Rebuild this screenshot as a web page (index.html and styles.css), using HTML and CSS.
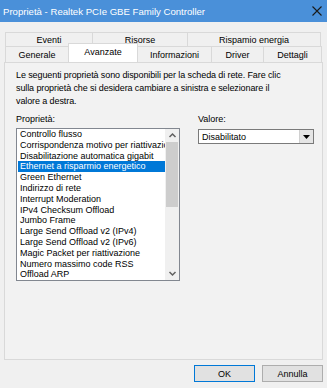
FILE: index.html
```html
<!doctype html>
<html lang="it">
<head>
	<meta charset="UTF-8">
	<title>Proprietà - Realtek PCIe GBE Family Controller</title>

	<link rel="stylesheet" href="styles.css">
</head>
<body>
	<div class="dialog">
		<div class="titlebar">
			<span class="title">Proprietà - Realtek PCIe GBE Family Controller</span>
			<svg class="close" width="10" height="10" viewBox="0 0 10 10">
				<path d="M0.5 0.5 L9.5 9.5 M9.5 0.5 L0.5 9.5" stroke="#1a1a1a" stroke-width="1.1" fill="none"/>
			</svg>
		</div>

		<div class="tabs">
			<div class="tab-row back">
				<div class="tab w-eventi">Eventi</div>
				<div class="tab w-risorse">Risorse</div>
				<div class="tab w-risparmio">Rispamio energia</div>
			</div>
			<div class="tab-row front">
				<div class="tab w-generale">Generale</div>
				<div class="tab w-avanzate active">Avanzate</div>
				<div class="tab w-informazioni">Informazioni</div>
				<div class="tab w-driver">Driver</div>
				<div class="tab w-dettagli">Dettagli</div>
			</div>
		</div>

		<div class="panel">
			<p class="intro">Le seguenti proprietà sono disponibili per la scheda di rete. Fare clic sulla proprietà che si desidera cambiare a sinistra e selezionare il valore a destra.</p>

			<div class="fields">
				<div class="col-props">
					<div class="label">Proprietà:</div>
					<div class="listbox">
						<ul class="items">
							<li>Controllo flusso</li>
							<li>Corrispondenza motivo per riattivazione</li>
							<li>Disabilitazione automatica gigabit</li>
							<li class="selected">Ethernet a risparmio energetico</li>
							<li>Green Ethernet</li>
							<li>Indirizzo di rete</li>
							<li>Interrupt Moderation</li>
							<li>IPv4 Checksum Offload</li>
							<li>Jumbo Frame</li>
							<li>Large Send Offload v2 (IPv4)</li>
							<li>Large Send Offload v2 (IPv6)</li>
							<li>Magic Packet per riattivazione</li>
							<li>Numero massimo code RSS</li>
							<li>Offload ARP</li>
						</ul>
						<div class="scrollbar">
							<svg class="arrow" width="13" height="9" viewBox="0 0 13 9">
								<path d="M3.5 6 L6.5 3 L9.5 6" stroke="#606060" stroke-width="1.5" fill="none"/>
							</svg>
							<div class="track">
								<div class="thumb"></div>
							</div>
							<svg class="arrow" width="13" height="9" viewBox="0 0 13 9">
								<path d="M3.5 3 L6.5 6 L9.5 3" stroke="#606060" stroke-width="1.5" fill="none"/>
							</svg>
						</div>
					</div>
				</div>

				<div class="col-value">
					<div class="label">Valore:</div>
					<div class="combo">
						<span class="combo-text">Disabilitato</span>
						<span class="combo-button">
							<svg width="7" height="4" viewBox="0 0 7 4">
								<path d="M0 0 L7 0 L3.5 4 Z" fill="#000"/>
							</svg>
						</span>
					</div>
				</div>
			</div>
		</div>

		<div class="buttons">
			<button class="btn default">OK</button>
			<button class="btn">Annulla</button>
		</div>
	</div>
</body>
</html>
```

FILE: styles.css
```css
html {
	box-sizing: border-box;
}

*, *:before, *:after {
	box-sizing: inherit;
}

body {
	margin: 0;
	font-family: "Liberation Sans", Arial, sans-serif;
	font-size: 9px;
	color: #000;
	background: #f0f0f0;
}

.dialog {
	width: 327px;
	height: 388px;
	display: flex;
	flex-direction: column;
	background: #f0f0f0;
}

.titlebar {
	height: 22px;
	background: #4a90d9;
	display: flex;
	align-items: center;
	justify-content: space-between;
	padding: 0 5px 0 3px;
}

.title {
	color: #fff;
	font-size: 9.6px;
}

.tabs {
	margin-top: 10px;
	padding: 0 4px 0 5px;
}

.tab-row {
	display: flex;
}

.tab {
	display: flex;
	align-items: center;
	justify-content: center;
	border: 1px solid #d9d9d9;
	margin-right: -1px;
	background: #f0f0f0;
}

.back .tab {
	height: 14px;
	border-bottom: none;
}

.front .tab {
	height: 16px;
	border-bottom: none;
}

.front .tab.active {
	height: 19px;
	margin-top: -3px;
	margin-bottom: -1px;
	background: #fff;
	z-index: 1;
	padding-bottom: 2px;
}

.w-eventi { width: 88px; }
.w-risorse { width: 96px; }
.w-risparmio { width: 134px; }
.w-generale { width: 64px; }
.w-avanzate { width: 70px; }
.w-informazioni { width: 75px; }
.w-driver { width: 53px; }
.w-dettagli { width: 59px; }

.panel {
	margin: 0 4px 0 4px;
	height: 298px;
	border: 1px solid #d9d9d9;
	background: #f2f2f2;
	padding: 6px 10px 0 11px;
}

.intro {
	margin: 0;
	line-height: 13px;
	width: 272px;
	letter-spacing: -0.1px;
}

.fields {
	display: flex;
	margin-top: 5px;
}

.label {
	height: 13px;
	line-height: 13px;
}

.col-props {
	width: 164px;
}

.col-value {
	margin-left: 18px;
}

.listbox {
	margin-top: 2px;
	height: 153px;
	border: 1px solid #828790;
	background: #fff;
	display: flex;
}

.items {
	list-style: none;
	margin: 0;
	padding: 0 0 0 1px;
	flex: 1;
	overflow: hidden;
}

.items li {
	height: 10.8px;
	line-height: 10.8px;
	padding-left: 2px;
	white-space: nowrap;
	overflow: hidden;
}

.items li.selected {
	background: #0078d7;
	color: #fff;
}

.scrollbar {
	width: 14px;
	background: #f0f0f0;
	display: flex;
	flex-direction: column;
	align-items: center;
}

.arrow {
	margin: 2px 0;
}

.track {
	flex: 1;
	width: 12px;
}

.thumb {
	height: 65px;
	background: #cdcdcd;
}

.combo {
	margin-top: 3px;
	width: 116px;
	height: 15px;
	border: 1px solid #7a7a7a;
	background: #fff;
	display: flex;
	align-items: center;
	justify-content: space-between;
	padding-left: 3px;
}

.combo-button {
	width: 14px;
	height: 13px;
	background: #e5e5e5;
	border-left: 1px solid #d0d0d0;
	display: flex;
	align-items: center;
	justify-content: center;
}

.buttons {
	display: flex;
	justify-content: flex-end;
	padding: 5px 4px 0 0;
	gap: 7px;
}

.btn {
	width: 61px;
	height: 17px;
	font-family: inherit;
	font-size: 9px;
	background: #e1e1e1;
	border: 1px solid #adadad;
	padding: 0;
	color: #000;
}

.btn.default {
	border-color: #0078d7;
}
```
